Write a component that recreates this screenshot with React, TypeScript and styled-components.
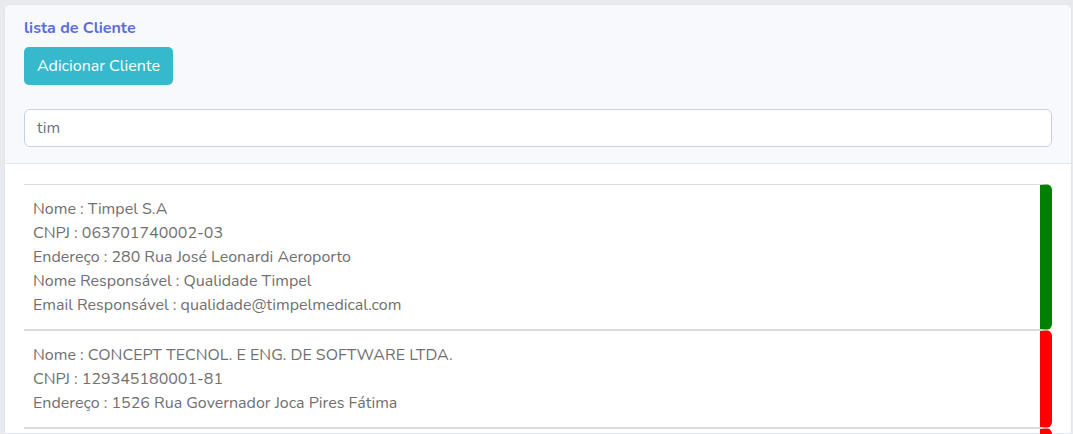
import React from "react";
import styled, { createGlobalStyle } from "styled-components";

const Global = createGlobalStyle`
  html, body { margin: 0; padding: 0; background: #e9eaee; }
  body { font-family: "Nunito", "Lato", "Noto Sans", sans-serif; }
  * { box-sizing: border-box; }
`;

const Page = styled.div`
  padding: 4px 1px 0 4px;
  height: 434px;
  overflow: hidden;
`;

const Card = styled.div`
  background: #fff;
  border: 1px solid #e3e6f0;
  border-radius: 6px 6px 0 0;
  height: 100%;
`;

const Header = styled.div`
  background: #f8f9fc;
  border-bottom: 1px solid #e3e6f0;
  border-radius: 6px 6px 0 0;
  padding: 12px 19px 16px 19px;
  display: flex;
  flex-direction: column;
  align-items: flex-start;
`;

const Title = styled.h6`
  margin: 0;
  font-size: 16px;
  font-weight: 700;
  color: #5a6fd8;
  line-height: 22px;
`;

const Button = styled.button`
  margin-top: 8px;
  height: 38px;
  padding: 0 13px;
  background: #36b9cc;
  border: none;
  border-radius: 5px;
  color: #fff;
  font-family: inherit;
  font-size: 16px;
`;

const Search = styled.input`
  margin-top: 24px;
  width: 100%;
  height: 38px;
  padding: 0 12px;
  border: 1px solid #c9cdec;
  border-radius: 6px;
  background: #fff;
  font-family: inherit;
  font-size: 16px;
  color: #6e707e;
  caret-color: #333;
  outline: none;
`;

const Body = styled.div`
  padding: 20px 19px 0 19px;
  display: flex;
  flex-direction: column;
`;

const Item = styled.div<{ $color: string }>`
  min-height: 26px;
  border-top: 1px solid #dcdcdc;
  border-bottom: 1px solid #dcdcdc;
  border-right: 12px solid ${(p) => p.$color};
  border-radius: 0 6px 6px 0;
  padding: 12px 9px;
  font-size: 16px;
  line-height: 24px;
  color: #707070;
`;

const Line = styled.div``;

const clients = [
  {
    color: "#008000",
    lines: [
      "Nome : Timpel S.A",
      "CNPJ : 063701740002-03",
      "Endereço : 280 Rua José Leonardi Aeroporto",
      "Nome Responsável : Qualidade Timpel",
      "Email Responsável : qualidade@timpelmedical.com",
    ],
  },
  {
    color: "#ff0000",
    lines: [
      "Nome : CONCEPT TECNOL. E ENG. DE SOFTWARE LTDA.",
      "CNPJ : 129345180001-81",
      "Endereço : 1526 Rua Governador Joca Pires Fátima",
    ],
  },
  {
    color: "#ff0000",
    lines: [] as string[],
  },
];

export default function App() {
  return (
    <Page>
      <Global />
      <Card>
        <Header>
          <Title>lista de Cliente</Title>
          <Button>Adicionar Cliente</Button>
          <Search defaultValue="tim" autoFocus />
        </Header>
        <Body>
          {clients.map((c, i) => (
            <Item key={i} $color={c.color}>
              {c.lines.map((l, j) => (
                <Line key={j}>{l}</Line>
              ))}
            </Item>
          ))}
        </Body>
      </Card>
    </Page>
  );
}
